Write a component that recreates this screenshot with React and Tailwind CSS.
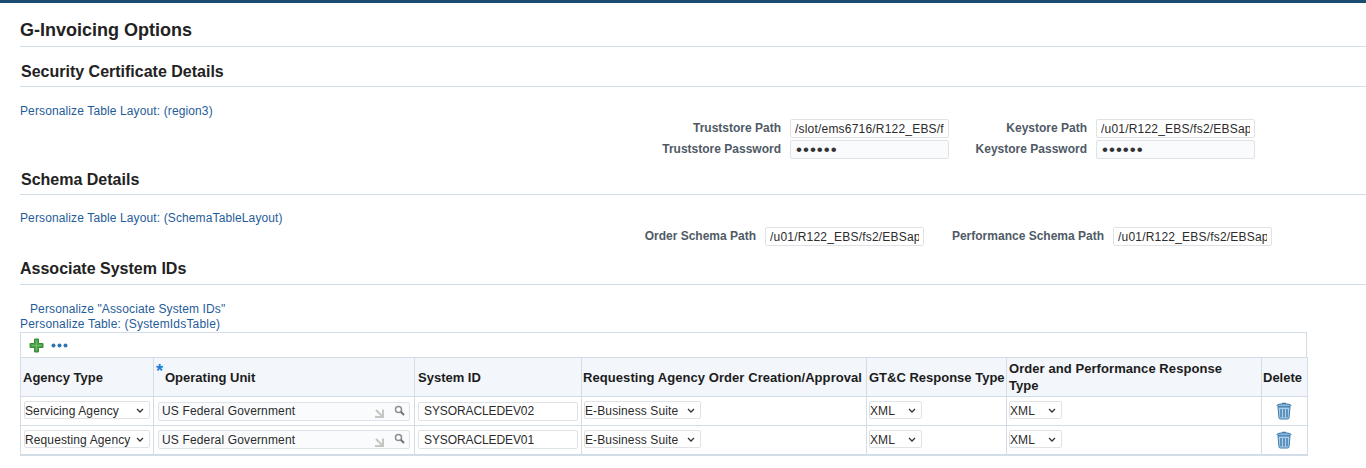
const font = { fontFamily: '"Liberation Sans", Arial, sans-serif' };

function Plus() {
  return (
    <svg width="15" height="15" viewBox="0 0 15 15" className="block">
      <path d="M5.5 1h4v4.500H14v4H9.500V14h-4V9.500H1v-4h4.500z" fill="#4ea24a" stroke="#3b8a3a" strokeWidth="1" />
      <path d="M7.500 3v9M3 7.500h9" stroke="#6cc062" strokeWidth="1" />
    </svg>
  );
}

function Dots() {
  return (
    <svg width="17" height="5" viewBox="0 0 17 5" className="block">
      <circle cx="2.500" cy="2.500" r="2" fill="#2e74b5" />
      <circle cx="8.500" cy="2.500" r="2" fill="#2e74b5" />
      <circle cx="14.500" cy="2.500" r="2" fill="#2e74b5" />
    </svg>
  );
}

function Trash() {
  return (
    <svg width="16" height="18" viewBox="0 0 16 18" className="block">
      <path d="M6 1.500h4" stroke="#3f78a8" strokeWidth="1.500" />
      <ellipse cx="8" cy="3.500" rx="7" ry="1.700" fill="#8ab8dc" stroke="#3f78a8" />
      <path d="M2 5l1 11q.2 1 1.500 1h7q1.300 0 1.500-1l1-11z" fill="#a9d0ee" stroke="#3f78a8" />
      <path d="M5 7v8.500M8 7v8.500M11 7v8.500" stroke="#2f6ca0" strokeWidth="1.200" />
    </svg>
  );
}

function Lookup() {
  return (
    <span className="absolute right-[5px] top-0 flex h-full items-center gap-[10px]">
      <svg width="10" height="10" viewBox="0 0 10 10" className="mt-[4px] block">
        <path d="M1 9h8V1.500M2 2l6 6" fill="none" stroke="#c4c6c4" strokeWidth="2" />
      </svg>
      <svg width="11" height="11" viewBox="0 0 11 11" className="mt-[-2px] block">
        <circle cx="4.500" cy="4.500" r="3" fill="#fff" stroke="#8a8f94" strokeWidth="1.500" />
        <path d="M6.800 6.800L10 10" stroke="#6f757a" strokeWidth="2" />
      </svg>
    </span>
  );
}

function Field({ value }) {
  return (
    <input
      readOnly
      type="text"
      value={value}
      className="h-[19px] w-[159px] rounded-[2px] border border-[#dfe3e8] bg-white px-[4px] text-[12px] tracking-[0.2px] text-[#2b2b2b] outline-none"
    />
  );
}

function PasswordField() {
  return (
    <input
      readOnly
      type="password"
      value="abcdef"
      className="h-[19px] w-[159px] rounded-[2px] border border-[#dfe3e8] bg-[#fafbfd] px-[5px] text-[17px] tracking-[1px] text-[#333] outline-none"
    />
  );
}

function Label({ children }) {
  return <label className="text-right text-[12px] font-bold leading-[19px] text-[#4f5a66]">{children}</label>;
}

function Heading({ children, className }) {
  return (
    <h2 className={`border-b border-[#d0dde6] text-[16px] font-bold leading-[18px] text-[#222] ${className}`}>
      {children}
    </h2>
  );
}

function Link({ children, className = "" }) {
  return <a className={`block text-[12px] leading-[14px] text-[#1f5c99] ${className}`}>{children}</a>;
}

function Select({ value, options, width }) {
  return (
    <span className="relative mb-[2px] block" style={{ width }}>
      <select
        defaultValue={value}
        className="block h-[18px] w-full appearance-none rounded-[2px] border border-[#dfe3e8] bg-white text-[12px] tracking-[0.12px] text-[#2b2b2b] outline-none"
      >
        {options.map((o) => (
          <option key={o}>{o}</option>
        ))}
      </select>
      <svg width="8" height="5" viewBox="0 0 8 5" className="pointer-events-none absolute right-[6px] top-[7px] block">
        <path d="M1 1l3 3 3-3" fill="none" stroke="#333" strokeWidth="1.300" />
      </svg>
    </span>
  );
}

const headCell =
  "border border-[#d3dde8] bg-[conic-gradient(#e9eef5_25%,#fdfdfe_0_50%,#e9eef5_0_75%,#fdfdfe_0)] bg-[length:2px_2px] px-[2px] text-left align-middle text-[13px] font-bold leading-[17px] text-[#1c1c1c]";
const cell = "border border-[#d3dde8] align-middle";

const rows = [
  ["Servicing Agency", "SYSORACLEDEV02"],
  ["Requesting Agency", "SYSORACLEDEV01"],
];

export default function App() {
  return (
    <div style={font} className="h-[468px] w-[1366px] overflow-hidden bg-white">
      <div className="h-[3px] bg-[#1b4d70]" />
      <div className="pl-5">
        <h1 className="border-b border-[#d0dde6] pt-[18px] pb-[6px] text-[18px] font-bold leading-[19px] text-[#222]">
          G-Invoicing Options
        </h1>

        <Heading className="pt-[16px] pb-[5px] pl-[1px]">Security Certificate Details</Heading>
        <div className="flex pt-[17px]">
          <div className="w-[641px]">
            <Link className="tracking-[0.12px]">Personalize Table Layout: (region3)</Link>
          </div>
          <div className="mt-[15px] grid grid-cols-[120px_159px_129px_159px] gap-x-[9px] gap-y-[2px]">
            <Label>Truststore Path</Label>
            <Field value="/slot/ems6716/R122_EBS/fs2/EBSapps" />
            <Label>Keystore Path</Label>
            <Field value="/u01/R122_EBS/fs2/EBSapps/comn" />
            <Label>Truststore Password</Label>
            <PasswordField />
            <Label>Keystore Password</Label>
            <PasswordField />
          </div>
        </div>

        <Heading className="pt-[12px] pb-[5px] pl-[1px]">Schema Details</Heading>
        <div className="flex pt-[16px]">
          <div className="w-[620px]">
            <Link className="tracking-[0.12px]">Personalize Table Layout: (SchemaTableLayout)</Link>
          </div>
          <div className="mt-[16px] grid grid-cols-[116px_159px_171px_159px] gap-x-[9px]">
            <Label>Order Schema Path</Label>
            <Field value="/u01/R122_EBS/fs2/EBSapps/comn" />
            <Label>Performance Schema Path</Label>
            <Field value="/u01/R122_EBS/fs2/EBSapps/comn" />
          </div>
        </div>

        <Heading className="pt-[14px] pb-[6px]">Associate System IDs</Heading>
        <Link className="pt-[17px] pl-[10px] tracking-[0.12px]">Personalize "Associate System IDs"</Link>
        <Link className="mt-[1px] tracking-[0.18px]">Personalize Table: (SystemIdsTable)</Link>

        <div className="mt-[1px] w-[1287px]">
          <div className="flex h-[25px] items-center gap-[7px] border border-b-0 border-[#d3dde8] pl-[8px]">
            <Plus />
            <Dots />
          </div>
          <table className="w-full table-fixed border-collapse border-b-2 border-[#d3dde8]">
            <colgroup>
              <col className="w-[133px]" />
              <col className="w-[261px]" />
              <col className="w-[167px]" />
              <col className="w-[285px]" />
              <col className="w-[140px]" />
              <col className="w-[255px]" />
              <col className="w-[46px]" />
            </colgroup>
            <thead>
              <tr className="h-[39px]">
                <th className={headCell}>Agency Type</th>
                <th className={headCell}>
                  <span className="relative pl-[9px]">
                    <span className="absolute left-0 top-[-8px] text-[18px] leading-[18px] text-[#1a80d8]">*</span>
                    Operating Unit
                  </span>
                </th>
                <th className={`${headCell} pl-[3px]`}>System ID</th>
                <th className={`${headCell} whitespace-nowrap pl-[1px] tracking-[0.07px]`}>Requesting Agency Order Creation/Approval</th>
                <th className={`${headCell} whitespace-nowrap`}>GT&amp;C Response Type</th>
                <th className={`${headCell} pr-[30px] tracking-[0.07px]`}>Order and Performance Response Type</th>
                <th className={`${headCell} pl-[1px]`}>Delete</th>
              </tr>
            </thead>
            <tbody>
              {rows.map(([agency, id]) => (
                <tr key={id} className="h-[29px]">
                  <td className={`${cell} pl-[3px]`}>
                    <Select value={agency} options={["Servicing Agency", "Requesting Agency"]} width={126} />
                  </td>
                  <td className={`${cell} pl-[4px]`}>
                    <span className="relative block w-[252px]">
                      <input
                        readOnly
                        value="US Federal Government"
                        className="block h-[19px] w-full rounded-[2px] border border-[#dfe3e8] bg-[#fafbfd] px-[3px] text-[12px] tracking-[0.15px] text-[#2b2b2b] outline-none"
                      />
                      <Lookup />
                    </span>
                  </td>
                  <td className={`${cell} pl-[3px]`}>
                    <input
                      readOnly
                      value={id}
                      className="block h-[19px] w-[160px] rounded-[2px] border border-[#dfe3e8] bg-white px-[5px] text-[12px] tracking-[-0.1px] text-[#2b2b2b] outline-none"
                    />
                  </td>
                  <td className={`${cell} pl-[2px]`}>
                    <Select value="E-Business Suite" options={["E-Business Suite"]} width={117} />
                  </td>
                  <td className={`${cell} pl-[2px]`}>
                    <Select value="XML" options={["XML", "JSON"]} width={53} />
                  </td>
                  <td className={`${cell} pl-[2px]`}>
                    <Select value="XML" options={["XML", "JSON"]} width={53} />
                  </td>
                  <td className={cell}>
                    <span className="flex justify-center pr-[2px]">
                      <Trash />
                    </span>
                  </td>
                </tr>
              ))}
            </tbody>
          </table>
        </div>
      </div>
    </div>
  );
}
